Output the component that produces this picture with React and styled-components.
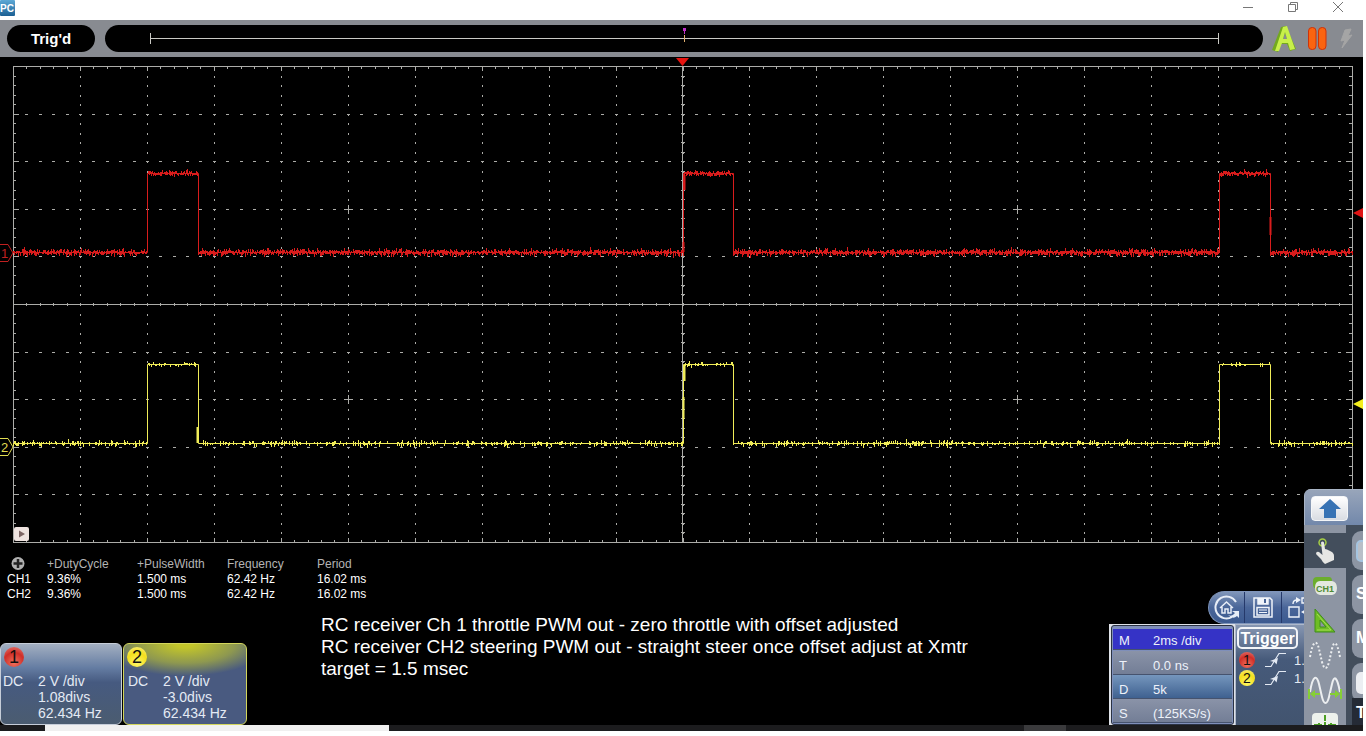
import React from 'react'
import styled, { createGlobalStyle } from 'styled-components'

const GlobalStyle = createGlobalStyle`
  * {
    box-sizing: border-box;
  }

  body {
    margin: 0;
    background: #fff;
    font-family: 'Liberation Sans', Arial, sans-serif;
  }

  button {
    margin: 0;
    padding: 0;
    border: 0;
    background: none;
    font-family: inherit;
    cursor: pointer;
  }

  svg {
    display: block;
    flex: none;
  }
`

const Window = styled.div`
  margin-right: 3px;
  background: #000;
`

const TitleBar = styled.header`
  display: flex;
  align-items: flex-start;
  justify-content: space-between;
  height: 20px;
  background: #fff;
`

const WindowButtons = styled.div`
  display: flex;
  gap: 31px;
  padding: 0 18px 0 0;
`

const WindowButton = styled.button`
  width: 14px;
  height: 14px;
`

const StatusBar = styled.div`
  display: flex;
  align-items: center;
  height: 37px;
  padding: 0 7px;
  background: #888b91;
`

const TriggerState = styled.div`
  width: 88px;
  margin-right: 10px;
  border-radius: 14px;
  background: #000;
  color: #fff;
  font-size: 15px;
  font-weight: bold;
  line-height: 27px;
  text-align: center;
`

const Timeline = styled.div`
  flex: 1;
  height: 27px;
  overflow: hidden;
  border-radius: 14px;
  background: #000;
`

const StatusButtons = styled.div`
  display: flex;
  align-items: center;
  gap: 11px;
  padding-left: 8px;
`

const Scope = styled.main`
  position: relative;
`

const Display = styled.div`
  position: relative;
`

const ExpandButton = styled.button`
  position: absolute;
  left: 14px;
  bottom: 4px;
  width: 15px;
  height: 14px;
  border-radius: 2px;
  background: #eee3df;
`

const Bottom = styled.div`
  display: flex;
  align-items: flex-end;
  justify-content: space-between;
  height: 180px;
  padding-right: 59px;
`

const Readings = styled.div`
  flex: 1;
  align-self: stretch;
  display: flex;
  flex-direction: column;
  justify-content: space-between;
`

const MeasureTable = styled.table`
  width: 401px;
  margin: 12px 0 0 6px;
  border-collapse: collapse;
  table-layout: fixed;
  color: #fff;
  font-size: 12px;
  line-height: 15px;

  th,
  td {
    width: 90px;
    padding: 0;
    font-weight: normal;
    text-align: left;
    white-space: nowrap;
  }

  th:first-child {
    width: 41px;
    padding-left: 1px;
  }

  thead th {
    color: #b4b4b4;
  }
`

const AddMeasure = styled.button`
  display: block;
  width: 14px;
  height: 15px;
  margin-left: 4px;
`

const ReadingsRow = styled.div`
  display: flex;
  align-items: flex-end;
`

const Channels = styled.div`
  display: flex;
  gap: 1px;
`

const ChannelCard = styled.section`
  width: ${props => (props.$selected ? 124 : 122)}px;
  height: 82px;
  padding: 3px 3px 0;
  border: 1px solid ${props => (props.$selected ? '#d3d65c' : '#c6cdd8')};
  border-radius: 6px;
  background: ${props => (props.$selected
    ? 'radial-gradient(ellipse 84px 32px at 50% 0, #c3c62a 10%, #8e9850 60%, #495a80 100%)'
    : 'linear-gradient(#a3afc1, #647ca2 30%, #465a80 48%, #4b5c70)')};
  color: #e4eaf4;
  font-size: 14px;
  line-height: 16px;
`

const Ball = styled.span`
  display: block;
  flex: none;
  width: ${props => props.$size}px;
  height: ${props => props.$size}px;
  border-radius: 50%;
  background: ${props => (props.$color === 'red'
    ? 'radial-gradient(circle at 50% 80%, #f0705c, #cf2e28 55%, #e88078 100%)'
    : 'radial-gradient(circle at 50% 80%, #fff76a, #f3df1c 55%, #f9f08a 100%)')};
  color: #111;
  font-size: ${props => props.$size - 2}px;
  line-height: ${props => props.$size}px;
  text-align: center;
`

const ChannelValues = styled.div`
  display: grid;
  grid-template-columns: 35px 1fr;
  padding-top: 6px;
  margin-left: ${props => (props.$selected ? 1 : -1)}px;

  span {
    grid-column: 2;
    white-space: nowrap;
  }

  span:first-child {
    grid-column: 1;
  }
`

const Note = styled.p`
  align-self: flex-start;
  margin: 0 0 45px 74px;
  color: #fff;
  font-size: 19px;
  line-height: 22px;
  white-space: pre-line;
`

const Controls = styled.aside`
  width: 195px;
  background: #000;
`

const Toolbar = styled.div`
  display: flex;
  width: 96px;
  height: 33px;
  margin-left: auto;
  overflow: hidden;
  border: 1px solid #7f95bb;
  border-right: 0;
  border-radius: 17px 0 0 17px;
  background: linear-gradient(#8096ba, #4a6699 50%, #3c5a90);
`

const ToolButton = styled.button`
  display: flex;
  flex: none;
  align-items: center;
  justify-content: center;
  width: ${props => props.$width}px;
  border-right: 1px solid #25396a;
`

const Panels = styled.div`
  display: flex;
  height: 101px;
`

const Timebase = styled.div`
  width: 126px;
  padding: 1px 1px 0 2px;
  background: #dfe2e8;
`

const TimebaseRows = styled.dl`
  height: 100px;
  margin: 0;
  padding: 3px 1px 1px;
  border: 1px solid #2b3344;
  border-radius: 3px;
  background: #7f8fba;
  color: #eef2fa;
  font-size: 13px;
`

const TimebaseRow = styled.div`
  display: grid;
  grid-template-columns: 34px 1fr;
  height: ${props => (props.$kind === 'main' ? 21 : 24)}px;
  padding-left: 6px;
  margin-bottom: ${props => (props.$kind === 'main' ? 1 : 0)}px;
  border-bottom: 1px solid #46536e;
  background: ${props => ({
    main: '#3533c6',
    plain: 'linear-gradient(#8a93a8, #737e96)',
    blue: 'linear-gradient(#7596bd, #3f6190)'
  })[props.$kind]};
  line-height: ${props => (props.$kind === 'main' ? 24 : 29)}px;

  dd {
    margin: 0;
    white-space: nowrap;
  }
`

const TriggerPanel = styled.div`
  flex: 1;
  overflow: hidden;
  padding: 2px 0 0 1px;
  border: 1px solid #aeb8ca;
  border-width: 1px 0 0 1px;
  background: linear-gradient(#8696b2, #465a7a 35%, #42546f);
`

const TriggerButton = styled.button`
  display: block;
  width: 61px;
  height: 22px;
  border: 2px solid #f2f4f8;
  border-radius: 5px;
  color: #fff;
  font-size: 16px;
  font-weight: bold;
  line-height: 17px;
  text-align: center;
`

const TriggerRow = styled.div`
  display: flex;
  align-items: center;
  height: 18px;
  padding-left: 2px;
  color: #e4eaf4;
  font-size: 13px;

  &:first-of-type {
    margin-top: 2px;
  }

  svg {
    margin: 0 7px 0 10px;
  }
`

const Dock = styled.nav`
  position: absolute;
  right: 0;
  bottom: 0;
  width: 59px;
  overflow: hidden;
  border-radius: 7px 0 0 0;
  background: #8d95a3;
`

const DockHead = styled.div`
  height: 36px;
  padding: 6px;
  border: 1px solid #a9b5c6;
  border-width: 1px 0 0 1px;
  background: linear-gradient(#98a5ba, #7288ab);
`

const CollapseButton = styled.button`
  display: flex;
  align-items: center;
  justify-content: center;
  width: 37px;
  height: 25px;
  border: 1px solid #f4f6f8;
  border-radius: 4px;
  background: linear-gradient(#fff, #d9dce2);
`

const DockBody = styled.div`
  display: flex;
  height: 200px;
  overflow: hidden;
`

const DockTools = styled.div`
  width: 42px;
  flex: none;
  padding-top: 8px;
`

const DockTool = styled.button`
  display: flex;
  align-items: center;
  justify-content: center;
  width: 42px;
  height: 35px;
  background: ${props => (props.$active ? '#434e5c' : 'transparent')};
`

const DockPages = styled.div`
  display: flex;
  flex: 1;
  flex-direction: column;
  gap: 5px;
  overflow: hidden;
  padding: 6px 0 0 6px;
  background: #434e5c;
`

const DockPage = styled.div`
  flex: none;
  width: 40px;
  height: 39px;
  padding: 9px 0 0 4px;
  border-radius: 9px 0 0 9px;
  background: #8d95a3;
  color: #fff;
  font-size: 16px;
  font-weight: bold;
  line-height: 20px;
`

const DockLast = styled(DockPage)`
  margin-top: -9px;
  border-radius: 0;
  background: #252b36;
  padding-top: 5px;
`

const Knob = styled.span`
  display: block;
  width: 30px;
  height: 22px;
  border: ${props => (props.$outlined ? '2px solid #a5c4e0' : '0')};
  border-radius: 5px;
  background: ${props => (props.$outlined ? '#b9bfc8' : '#eceef2')};
`

const Taskbar = styled.footer`
  display: flex;
  height: 6px;
  background: #1c1c1e;
`

const TaskItem = styled.span`
  width: ${props => props.$width}px;
  margin-left: ${props => props.$gap}px;
  background: ${props => props.$color};
`

// plot area inside the display svg
const PLOT = { left: 13, right: 1352, top: 9, bottom: 485, cols: 20, rows: 10 }
const COL = (PLOT.right - PLOT.left) / PLOT.cols
const ROW = (PLOT.bottom - PLOT.top) / PLOT.rows
const AXIS_X = 682
const AXIS_Y = 247

const gridPath = () => {
  let d = ''
  for (let c = 1; c < PLOT.cols; c++) {
    const x = Math.round(PLOT.left + c * COL) + 0.5
    for (let i = 1; i < 50; i++) {
      d += `M${x} ${Math.round(PLOT.top + (i * ROW) / 5)}v2`
    }
  }
  for (let r = 1; r < PLOT.rows; r++) {
    const y = Math.round(PLOT.top + r * ROW) + 0.5
    for (let i = 1; i < 100; i++) {
      d += `M${Math.round(PLOT.left + (i * COL) / 5) - 1} ${y}h3`
    }
  }
  return d
}

const tickPath = () => {
  let d = ''
  for (let i = 1; i < 100; i++) {
    const x = Math.round(PLOT.left + (i * COL) / 5) + 0.5
    const size = i % 5 ? 3 : 5
    d += `M${x} ${PLOT.top}v${size}M${x} ${PLOT.bottom}v-${size - 1}M${x} ${AXIS_Y - 1}v3`
  }
  for (let i = 1; i < 50; i++) {
    const y = Math.round(PLOT.top + (i * ROW) / 5) + 0.5
    const size = i % 5 ? 3 : 6
    d += `M${PLOT.left} ${y}h${size}M${PLOT.right} ${y}h-${size}M${AXIS_X - 1} ${y}h4`
  }
  return d
}

const PULSES = [[147, 198], [683, 733], [1219, 1270]]

// one flat line per level, with a random vertical bar on each column for the noise
const tracePath = (base, high, density, reach, seed) => {
  let state = seed
  const random = () => {
    state = (state * 16807) % 2147483647
    return state / 2147483647
  }
  let d = `M${PLOT.left} ${base + 0.5}`
  PULSES.forEach(([start, end]) => {
    d += `H${start + 0.5}V${high + 0.5}H${end + 0.5}V${base + 0.5}`
  })
  d += `H${PLOT.right}`
  for (let x = PLOT.left; x <= PLOT.right; x++) {
    const inPulse = PULSES.some(([start, end]) => x > start && x < end)
    const level = inPulse ? high : base
    const spread = inPulse ? reach - 1 : reach
    const noisy = random() < density
    const up = Math.round(random() * random() * spread)
    const down = Math.round(random() * random() * spread)
    const shift = random() < 0.5 ? 0 : 1
    if (noisy) {
      d += `M${x + 0.5} ${level - up - shift}V${level + 2 + down - shift}`
    }
  }
  return d
}

const CROSSES = [[348, 152], [1017, 152], [348, 342], [1017, 342]]

const Graph = () => (
  <svg viewBox="0 0 1363 488" width="100%">
    <g fill="none" stroke="#acaca8">
      <path d={gridPath()} />
      <path d={tickPath()} />
      <rect x="13.5" y="9.5" width="1339" height="476" />
      <path d={`M${AXIS_X + 0.5} 9V485M13 ${AXIS_Y + 0.5}H1352`} />
      {CROSSES.map(([x, y]) => (
        <path key={`${x}-${y}`} d={`M${x - 4} ${y + 0.5}h9M${x + 0.5} ${y - 4}v9`} />
      ))}
    </g>
    <path d={tracePath(195, 116, 0.95, 4, 77)} fill="none" stroke="#d81c1c" />
    <path d="M683.500 195V185M684.500 133V118M1270.500 178V160" fill="none" stroke="#d81c1c" strokeWidth="2" />
    <path d={tracePath(386, 307, 0.45, 3, 1234)} fill="none" stroke="#f0ec58" />
    <path d="M683.500 362V340M684.500 324V308M197.500 386V370" fill="none" stroke="#f0ec58" strokeWidth="2" />
    <path d="M676 1H689L682.500 9Z" fill="#e8140f" />
    <path d="M1363 151V161L1353 156Z" fill="#e01414" />
    <path d="M1363 342V352L1353 347Z" fill="#f4ee1c" />
    <path d="M0 187.500H8L13 196L8 204.500H0" fill="#000" stroke="#c02020" />
    <path d="M0 381.500H8L13 390L8 398.500H0" fill="#000" stroke="#e0dc50" />
    <text x="1" y="201" fill="#c02020" fontSize="13">1</text>
    <text x="1" y="395" fill="#e0dc50" fontSize="13">2</text>
  </svg>
)

const EdgeIcon = () => (
  <svg width="22" height="16" viewBox="0 0 22 16" fill="none" stroke="#e4eaf4" strokeWidth="1.200">
    <path d="M0 14.500H6L14 1.500H21" />
    <path d="M5 9L13 6L11.500 12.500L9.500 10Z" fill="#e4eaf4" stroke="none" />
  </svg>
)

const HomeIcon = () => (
  <svg width="26" height="26" viewBox="0 0 26 26" fill="none" stroke="#e7edf7">
    <path d="M22 7A11 11 0 1 0 18 22" strokeWidth="2" />
    <path d="M14 20Q18 22 21 18L18 16H25V23L23 21Q19 25 14 20Z" fill="#e7edf7" stroke="none" />
    <path d="M6 13L12.500 7L19 13M8 12V18H11V14H14V18H17V12" strokeWidth="1.500" />
  </svg>
)

const SaveIcon = () => (
  <svg width="20" height="21" viewBox="0 0 20 21" fill="none" stroke="#f0f4fa" strokeWidth="1.500">
    <path d="M1 1H17L19 3V20H1Z" />
    <path d="M5 1V7H15V1" fill="#f0f4fa" />
    <path d="M12 2V6" stroke="#486496" strokeWidth="2" />
    <path d="M4 10.500H16V18H4Z" />
    <path d="M6 13H14M6 15.500H14" strokeWidth="1" />
  </svg>
)

const SwapIcon = () => (
  <svg width="24" height="22" viewBox="0 0 24 22" fill="none" stroke="#f0f4fa" strokeWidth="1.400">
    <path d="M1 10H11V20H1Z" />
    <path d="M14 1H22V6H14Z" />
    <path d="M5 7Q5 3 9 3" />
    <path d="M8 0L13 3L8 6ZM18 12L13 15L18 18Z" fill="#f0f4fa" stroke="none" />
  </svg>
)

const HandIcon = () => (
  <svg width="20" height="26" viewBox="0 0 20 26">
    <circle cx="7.500" cy="4.500" r="3.500" fill="none" stroke="#a6cf45" strokeWidth="1.500" />
    <path
      d="M6 4.500Q7.500 2.500 9 4.500L10 11L12 11.500L14 12.500L16 13.500Q19 15 19 18V22L10 26Q8 25 6 21L1 16Q1 13 4 14L7.500 17Z"
      fill="#e6e6e4"
    />
  </svg>
)

const ChannelIcon = () => (
  <svg width="26" height="20" viewBox="0 0 26 20">
    <path d="M5 1H17Q20 1 20 5V13H4Q1 12 1 8V5Q1 1 5 1Z" fill="#6cae2d" />
    <path d="M8 5H20Q25 6 25 12Q25 18 20 19H8Q3 18 3 12Q3 5 8 5Z" fill="#e3e8df" />
    <text x="4" y="16" fontSize="9" fontWeight="bold" fill="#4f8a35">CH1</text>
  </svg>
)

const MeasureIcon = () => (
  <svg width="22" height="25" viewBox="0 0 22 25">
    <path d="M1 1L21 24H1Z M6 12V19H12Z" fill="#6fbd25" fillRule="evenodd" stroke="#3e8f18" />
    <path d="M3 6L17 22H3" fill="none" stroke="#a6dd55" />
  </svg>
)

const WaveIcon = ({ dotted }) => (
  <svg width="34" height="32" viewBox="0 0 34 32" fill="none">
    <path
      d="M2 17C5 -1 9 0 11 9L14 22C16 30 19 30 21 22L24 9C26 0 29 1 32 17"
      stroke="#eceef0"
      strokeWidth="2"
      strokeDasharray={dotted ? '2 2' : 'none'}
    />
    {!dotted && (
      <g stroke="#86cf36" strokeWidth="2">
        <path d="M1 14V24M33 14V24M3 19H12M22 19H31" />
        <path d="M2 19L7 15V23ZM32 19L27 15V23Z" fill="#86cf36" stroke="none" />
      </g>
    )}
  </svg>
)

const CursorIcon = () => (
  <svg width="26" height="26" viewBox="0 0 26 26">
    <rect width="26" height="26" rx="4" fill="#edf1ec" />
    <path d="M13 2V8M13 9V24M2 12H10M16 12H24" stroke="#4c9f23" strokeWidth="2" />
    <path d="M7 10V15M19 10V15M10 13H16" stroke="#4c9f23" strokeWidth="2" />
  </svg>
)

const measurements = [
  { channel: 'CH1', values: ['9.36%', '1.500 ms', '62.42 Hz', '16.02 ms'] },
  { channel: 'CH2', values: ['9.36%', '1.500 ms', '62.42 Hz', '16.02 ms'] }
]

const channels = [
  { id: 1, color: 'red', scale: '2 V /div', offset: '1.08divs', frequency: '62.434 Hz' },
  { id: 2, color: 'yellow', scale: '2 V /div', offset: '-3.0divs', frequency: '62.434 Hz', selected: true }
]

const timebase = [
  { name: 'M', value: '2ms /div', kind: 'main' },
  { name: 'T', value: '0.0 ns', kind: 'plain' },
  { name: 'D', value: '5k', kind: 'blue' },
  { name: 'S', value: '(125KS/s)', kind: 'plain' }
]

const note = `RC receiver Ch 1 throttle PWM out - zero throttle with offset adjusted
RC receiver CH2 steering PWM out - straight steer once offset adjust at Xmtr
target = 1.5 msec`

const Header = () => (
  <>
    <TitleBar>
      <svg width="15" height="16" viewBox="0 0 15 16">
        <defs>
          <linearGradient id="logo" x2="0" y2="1">
            <stop stopColor="#5ea9d6" />
            <stop offset="1" stopColor="#1b5f93" />
          </linearGradient>
        </defs>
        <rect width="15" height="16" rx="1" fill="url(#logo)" />
        <text x="0" y="12" fontSize="10" fontWeight="bold" fill="#fff">PC</text>
      </svg>
      <WindowButtons>
        <WindowButton aria-label="Minimize">
          <svg width="14" height="14" fill="none" stroke="#777"><path d="M2 7.500H12" /></svg>
        </WindowButton>
        <WindowButton aria-label="Restore">
          <svg width="14" height="14" fill="none" stroke="#777">
            <path d="M2.500 4.500H9.500V11.500H2.500ZM4.500 4V2.500H11.500V9.500H10" />
          </svg>
        </WindowButton>
        <WindowButton aria-label="Close">
          <svg width="14" height="14" fill="none" stroke="#777"><path d="M2 2L12 12M12 2L2 12" /></svg>
        </WindowButton>
      </WindowButtons>
    </TitleBar>
    <StatusBar>
      <TriggerState>Trig'd</TriggerState>
      <Timeline>
        <svg width="100%" height="27" viewBox="0 0 1158 27" fill="none">
          <path d="M45.500 8V19M1113.500 8V19M45 13.500H1113" stroke="#c9c9c4" />
          <path d="M579.500 10V17" stroke="#e0b070" />
          <path d="M578 3H581V6H580V9H579V6H578Z" fill="#c030c8" />
        </svg>
      </Timeline>
      <StatusButtons>
        <button aria-label="Auto">
          <svg width="26" height="28" viewBox="0 0 26 28">
            <path d="M1 25L10 2L15 1L25 24L19 26L16 19H10L7 27Z M12 14H16L14 8Z" fill="#73a91d" fillRule="evenodd" />
            <path d="M4 26L12 2L16 1L24 24L19 25L17 18H11L8 26Z M12 14H16L14 7Z" fill="#c8f04a" fillRule="evenodd" />
          </svg>
        </button>
        <button aria-label="Pause">
          <svg width="19" height="25" viewBox="0 0 19 25" fill="#fa6410" stroke="#cf3208">
            <rect x="0.500" y="1.500" width="7.500" height="22" rx="3.500" />
            <rect x="10.500" y="1.500" width="7.500" height="22" rx="3.500" />
          </svg>
        </button>
        <button aria-label="Single">
          <svg width="18" height="22" viewBox="0 0 18 22">
            <path d="M7 2L13 1L10 8L14 7L4 20L7 12L3 13Z" fill="#a5a5a5" stroke="#a5a5a5" />
          </svg>
        </button>
      </StatusButtons>
    </StatusBar>
  </>
)

const Measurements = () => (
  <MeasureTable>
    <thead>
      <tr>
        <th>
          <AddMeasure aria-label="Add measurement">
            <svg width="14" height="15" viewBox="0 0 14 15">
              <circle cx="7" cy="6.500" r="6.500" fill="#b0b0b0" />
              <path d="M7 2V11M2.500 6.500H11.500" stroke="#222" strokeWidth="2.500" />
            </svg>
          </AddMeasure>
        </th>
        <th>+DutyCycle</th>
        <th>+PulseWidth</th>
        <th>Frequency</th>
        <th>Period</th>
      </tr>
    </thead>
    <tbody>
      {measurements.map(row => (
        <tr key={row.channel}>
          <th>{row.channel}</th>
          {row.values.map((value, i) => <td key={i}>{value}</td>)}
        </tr>
      ))}
    </tbody>
  </MeasureTable>
)

const SidePanel = () => (
  <Dock>
    <DockHead>
      <CollapseButton aria-label="Collapse">
        <svg width="22" height="19" viewBox="0 0 22 19">
          <path d="M11 0L22 10H17V19H5V10H0Z" fill="#3873b4" />
        </svg>
      </CollapseButton>
    </DockHead>
    <DockBody>
      <DockTools>
        <DockTool $active aria-label="Touch"><HandIcon /></DockTool>
        <DockTool aria-label="Channel 1"><ChannelIcon /></DockTool>
        <DockTool aria-label="Measure"><MeasureIcon /></DockTool>
        <DockTool aria-label="Sample"><WaveIcon dotted /></DockTool>
        <DockTool aria-label="Horizontal"><WaveIcon /></DockTool>
        <DockTool aria-label="Cursor"><CursorIcon /></DockTool>
      </DockTools>
      <DockPages>
        <DockPage><Knob $outlined /></DockPage>
        <DockPage>S</DockPage>
        <DockPage>M</DockPage>
        <DockPage><Knob /></DockPage>
        <DockLast>T</DockLast>
      </DockPages>
    </DockBody>
  </Dock>
)

function App() {
  return (
    <>
      <GlobalStyle />
      <Window>
        <Header />
        <Scope>
          <Display>
            <Graph />
            <ExpandButton aria-label="Expand">
              <svg width="15" height="14"><path d="M5 3.500L11 7L5 10.500Z" fill="#7d6664" /></svg>
            </ExpandButton>
          </Display>
          <Bottom>
            <Readings>
              <Measurements />
              <ReadingsRow>
                <Channels>
                  {channels.map(channel => (
                    <ChannelCard key={channel.id} $selected={channel.selected}>
                      <Ball $size={20} $color={channel.color}>{channel.id}</Ball>
                      <ChannelValues $selected={channel.selected}>
                        <span>DC</span>
                        <span>{channel.scale}</span>
                        <span>{channel.offset}</span>
                        <span>{channel.frequency}</span>
                      </ChannelValues>
                    </ChannelCard>
                  ))}
                </Channels>
                <Note>{note}</Note>
              </ReadingsRow>
            </Readings>
            <Controls>
              <Toolbar>
                <ToolButton $width={36} aria-label="Default setup"><HomeIcon /></ToolButton>
                <ToolButton $width={37} aria-label="Save"><SaveIcon /></ToolButton>
                <ToolButton $width={37} aria-label="Exchange"><SwapIcon /></ToolButton>
              </Toolbar>
              <Panels>
                <Timebase>
                  <TimebaseRows>
                    {timebase.map(row => (
                      <TimebaseRow key={row.name} $kind={row.kind}>
                        <dt>{row.name}</dt>
                        <dd>{row.value}</dd>
                      </TimebaseRow>
                    ))}
                  </TimebaseRows>
                </Timebase>
                <TriggerPanel>
                  <TriggerButton>Trigger</TriggerButton>
                  {channels.map(channel => (
                    <TriggerRow key={channel.id}>
                      <Ball $size={16} $color={channel.color}>{channel.id}</Ball>
                      <EdgeIcon />
                      1.
                    </TriggerRow>
                  ))}
                </TriggerPanel>
              </Panels>
            </Controls>
          </Bottom>
          <SidePanel />
        </Scope>
        <Taskbar>
          <TaskItem $gap={45} $width={344} $color="#f0f0f0" />
          <TaskItem $gap={635} $width={42} $color="#3a3a3c" />
        </Taskbar>
      </Window>
    </>
  )
}

export default App
